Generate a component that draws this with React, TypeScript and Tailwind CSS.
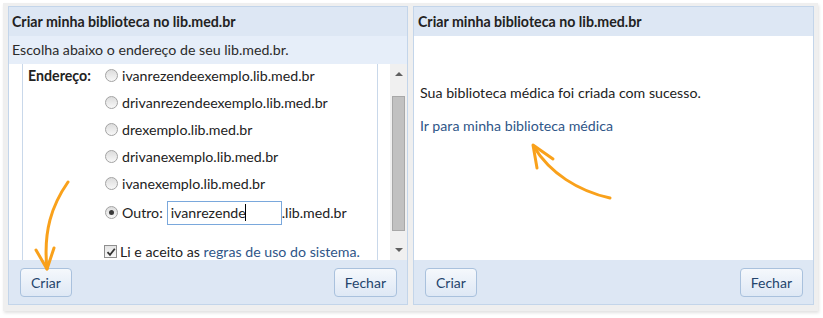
import React from 'react'

const font = { fontFamily: 'Lato, "Liberation Sans", sans-serif' }

function Radio({ checked = false }: { checked?: boolean }) {
  return (
    <span className="relative inline-flex h-[13px] w-[13px] shrink-0 items-center justify-center rounded-full border border-[#a3a3a3] bg-gradient-to-b from-[#dcdcdc] to-[#f8f8f8]">
      {checked && <span className="h-[5px] w-[5px] rounded-full bg-[#3a3a3a]" />}
    </span>
  )
}

function Button({ children }: { children: React.ReactNode }) {
  return (
    <button className="h-[29px] rounded-[4px] border border-[#a9c1dd] bg-gradient-to-b from-[#f5f8fc] to-[#dee8f5] px-[10px] text-[14px] text-[#24446c]">
      {children}
    </button>
  )
}

function Scrollbar() {
  return (
    <div className="flex w-[17px] shrink-0 flex-col items-center bg-[#f0f0f0]">
      <div className="flex h-[20px] items-center">
        <span className="h-0 w-0 border-x-[4px] border-b-[4px] border-x-transparent border-b-[#606060]" />
      </div>
      <div className="mt-[12px] h-[135px] w-[13px] border border-[#a8a8a8] bg-[#c1c1c1]" />
      <div className="flex-1" />
      <div className="flex h-[20px] items-center">
        <span className="h-0 w-0 border-x-[4px] border-t-[4px] border-x-transparent border-t-[#606060]" />
      </div>
    </div>
  )
}

const options = [
  'ivanrezendeexemplo.lib.med.br',
  'drivanrezendeexemplo.lib.med.br',
  'drexemplo.lib.med.br',
  'drivanexemplo.lib.med.br',
  'ivanexemplo.lib.med.br',
]

export default function App() {
  return (
    <div className="relative h-[318px] w-[823px] bg-white text-[14.2px] text-[#222]" style={font}>
      <div className="ml-[3px] mt-[3px] flex h-[308px] w-[815px] gap-[5px] bg-[#efefef] pl-[5px] pt-[3px] shadow-[1px_2px_3px_rgba(0,0,0,0.12)]">
        {/* Left panel */}
        <div className="flex h-[299px] w-[400px] flex-col border border-[#c3d5ea] bg-white">
          <div className="flex h-[29px] items-center bg-[#dde7f4] px-[3px] font-bold">
            Criar minha biblioteca no lib.med.br
          </div>
          <div className="flex h-[28px] items-center bg-[#e6eef9] px-[3px] text-[#2b2b2b]">
            Escolha abaixo o endereço de seu lib.med.br.
          </div>
          <div className="flex flex-1 overflow-hidden">
            <div className="ml-[13px] w-[356px] shrink-0 overflow-hidden border-x border-[#c9d8ea]">
              <div className="mt-[-2px] flex">
                <div className="w-[82px] shrink-0 pl-[5px] font-bold leading-[27px]">Endereço:</div>
                <div className="flex flex-col">
                  {options.map((o) => (
                    <div key={o} className="flex h-[27px] items-center gap-[4px]">
                      <Radio />
                      <span>{o}</span>
                    </div>
                  ))}
                  <div className="flex h-[31px] items-center gap-[4px]">
                    <Radio checked />
                    <span>Outro:</span>
                    <div className="flex h-[24px] w-[115px] items-center border border-[#7aa8dc] px-[3px]">
                      <span>ivanrezende</span>
                      <span className="ml-[-1px] h-[17px] w-[1px] bg-black" />
                    </div>
                    <span className="ml-[-4px]">.lib.med.br</span>
                  </div>
                  <div className="ml-[-1px] mt-[10px] flex h-[27px] items-center gap-[3px]">
                    <span className="flex h-[13px] w-[13px] items-center justify-center border border-[#8f8f8f] bg-gradient-to-b from-[#e4e4e4] to-[#f8f8f8]">
                      <svg width="10" height="10" viewBox="0 0 10 10">
                        <path d="M1.5 5.2 L4 7.8 L8.8 1.8" fill="none" stroke="#333" strokeWidth="1.8" />
                      </svg>
                    </span>
                    <span>
                      Li e aceito as <span className="text-[#2f5688]">regras de uso do sistema.</span>
                    </span>
                  </div>
                </div>
              </div>
            </div>
            <div className="flex-1" />
            <Scrollbar />
          </div>
          <div className="flex h-[44px] items-center justify-between bg-[#dde7f4] pl-[11px] pr-[10px]">
            <Button>Criar</Button>
            <Button>Fechar</Button>
          </div>
        </div>

        {/* Right panel */}
        <div className="flex h-[299px] w-[401px] flex-col border border-[#c3d5ea] bg-white">
          <div className="flex h-[29px] items-center bg-[#dde7f4] px-[4px] font-bold">
            Criar minha biblioteca no lib.med.br
          </div>
          <div className="flex-1 px-[6px] pt-[47px]">
            <p className="leading-[20px]">Sua biblioteca médica foi criada com sucesso.</p>
            <p className="mt-[13px] leading-[20px] text-[#2f5688]">Ir para minha biblioteca médica</p>
          </div>
          <div className="flex h-[44px] items-center justify-between bg-[#dde7f4] pl-[11px] pr-[10px]">
            <Button>Criar</Button>
            <Button>Fechar</Button>
          </div>
        </div>
      </div>

      <svg className="pointer-events-none absolute inset-0" width="823" height="318">
        <g fill="none" stroke="#f9a11b" strokeWidth="3" strokeLinecap="round" strokeLinejoin="round">
          <path d="M68 179 C 52 202, 43 228, 47 266" />
          <path d="M36 247 L47 266 L54 245" />
          <path d="M610 195 C 578 188, 550 170, 534 144" />
          <path d="M553 156 L533 142 L537 165" />
        </g>
      </svg>
    </div>
  )
}
